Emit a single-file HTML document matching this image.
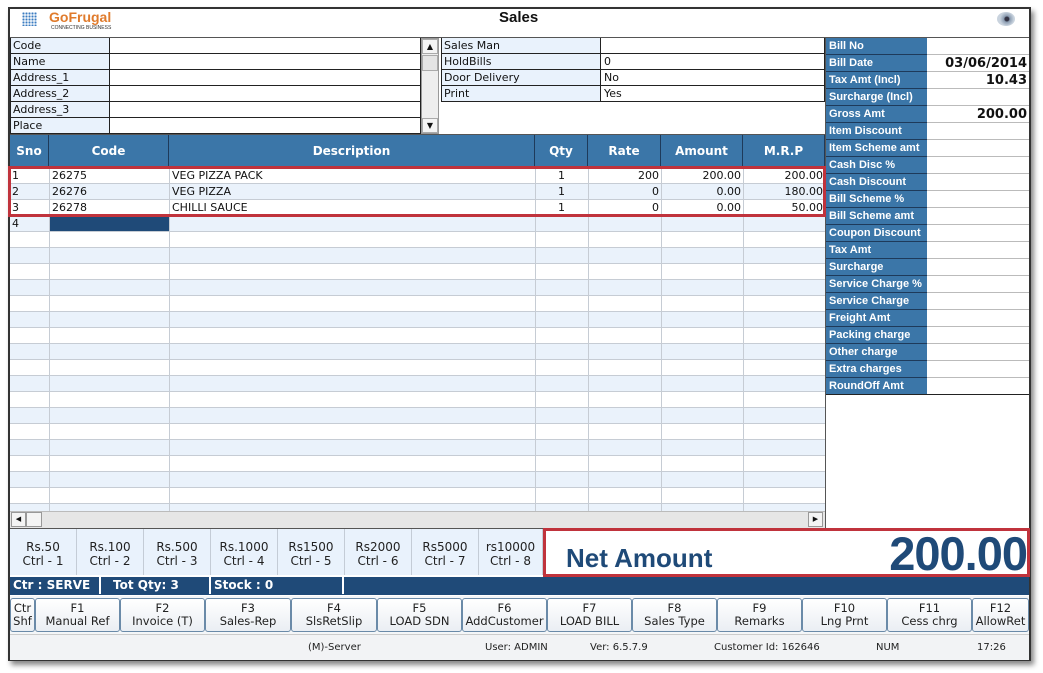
<!DOCTYPE html>
<html><head><meta charset="utf-8"><style>
*{margin:0;padding:0;box-sizing:border-box}
body{width:1043px;height:673px;background:#fff;position:relative;overflow:hidden;font-family:"DejaVu Sans","Liberation Sans",sans-serif;font-size:11px;color:#111}
.a{position:absolute}
.win{left:8px;top:7px;width:1023px;height:654px;border:2px solid #333;background:#fff;box-shadow:3px 4px 5px #888}
.lbl{background:#e9f2fc;border:1px solid #222;border-top:none;padding-left:2px;line-height:15px;height:16px}
.val{background:#fff;border:1px solid #222;border-top:none;border-left:none;padding-left:3px;line-height:15px;height:16px}
.rl{left:826px;width:101px;height:17px;background:#3b76a8;color:#fff;font-family:"Liberation Sans",sans-serif;font-weight:bold;font-size:11px;line-height:16px;padding-left:3px;border-bottom:1px solid #1e3a5a;white-space:nowrap;overflow:hidden}
.rv{left:927px;width:102px;height:17px;border-bottom:1px solid #bbb;text-align:right;font-weight:bold;font-size:13px;line-height:17px;padding-right:2px}
.hd{top:135px;height:33px;background:#3b76a8;color:#fff;font-weight:bold;font-size:12px;line-height:33px;text-align:center;border-right:1px solid #1e3a5a}
.row{left:10px;width:815px;height:16px;line-height:15px;border-bottom:1px solid #c6ccd4}
.c{position:absolute;top:0;height:15px;padding:0 2px;white-space:nowrap}
.den{top:529px;height:46px;width:67px;border-right:1px solid #c4ccd6;background:#e9f2fc;text-align:center;font-size:12px;line-height:14px;padding-top:11px;color:#222}
.fk{top:598px;height:34px;border:1px solid #6a8aa8;border-radius:3px;background:linear-gradient(#fff,#eaeef3);text-align:center;font-size:11.5px;line-height:13px;padding-top:3px;color:#222;white-space:nowrap;overflow:hidden}
.st{top:642px;font-size:10px;color:#222}
</style></head><body>
<div class="a win"></div>
<!-- title -->
<div class="a" style="left:22px;top:12px;width:15px;height:14px;background:radial-gradient(circle,#3a7bc0 1px,transparent 1.2px) 0 0/3px 3px"></div>
<div class="a" style="left:49px;top:9px;font-family:'Liberation Sans',sans-serif;font-weight:bold;font-size:14px;color:#e07b2c">GoFrugal</div>
<div class="a" style="left:51px;top:25px;font-size:5px;color:#333;font-family:'Liberation Sans',sans-serif">CONNECTING BUSINESS</div>
<div class="a" style="left:499px;top:9px;font-family:'Liberation Sans',sans-serif;font-weight:bold;font-size:15px">Sales</div>
<div class="a" style="left:997px;top:12px;width:18px;height:14px;border-radius:50%;background:radial-gradient(circle at 55% 50%,#334 2px,#8a9bb0 3px,#c9d3de 7px)"></div>
<div class="a" style="left:10px;top:37px;width:1019px;height:1px;background:#555"></div>
<!-- left form -->
<div class="a" style="left:10px;top:38px;width:411px;border-top:1px solid #222"></div>
<div class="a lbl" style="left:10px;top:38px;width:100px">Code</div><div class="a val" style="left:110px;top:38px;width:311px"></div>
<div class="a lbl" style="left:10px;top:54px;width:100px">Name</div><div class="a val" style="left:110px;top:54px;width:311px"></div>
<div class="a lbl" style="left:10px;top:70px;width:100px">Address_1</div><div class="a val" style="left:110px;top:70px;width:311px"></div>
<div class="a lbl" style="left:10px;top:86px;width:100px">Address_2</div><div class="a val" style="left:110px;top:86px;width:311px"></div>
<div class="a lbl" style="left:10px;top:102px;width:100px">Address_3</div><div class="a val" style="left:110px;top:102px;width:311px"></div>
<div class="a lbl" style="left:10px;top:118px;width:100px">Place</div><div class="a val" style="left:110px;top:118px;width:311px"></div>
<div class="a" style="left:421px;top:38px;width:18px;height:96px;background:#eee;border:1px solid #999"></div>
<div class="a" style="left:422px;top:39px;width:16px;height:15px;background:#f4f4f4;border:1px solid #aaa;font-size:8px;text-align:center;line-height:13px">▲</div>
<div class="a" style="left:422px;top:55px;width:16px;height:16px;background:#e4e4e4;border:1px solid #aaa"></div>
<div class="a" style="left:422px;top:118px;width:16px;height:15px;background:#f4f4f4;border:1px solid #aaa;font-size:8px;text-align:center;line-height:13px">▼</div>
<!-- middle form -->
<div class="a" style="left:441px;top:38px;width:384px;border-top:1px solid #222"></div>
<div class="a lbl" style="left:441px;top:38px;width:160px">Sales Man</div><div class="a val" style="left:601px;top:38px;width:224px"></div>
<div class="a lbl" style="left:441px;top:54px;width:160px">HoldBills</div><div class="a val" style="left:601px;top:54px;width:224px">0</div>
<div class="a lbl" style="left:441px;top:70px;width:160px">Door Delivery</div><div class="a val" style="left:601px;top:70px;width:224px">No</div>
<div class="a lbl" style="left:441px;top:86px;width:160px">Print</div><div class="a val" style="left:601px;top:86px;width:224px">Yes</div>
<div class="a" style="left:10px;top:134px;width:816px;height:1px;background:#555"></div>
<!-- right panel -->
<div class="a rl" style="top:38px">Bill No</div><div class="a rv" style="top:38px"></div>
<div class="a rl" style="top:55px">Bill Date</div><div class="a rv" style="top:55px">03/06/2014</div>
<div class="a rl" style="top:72px">Tax Amt (Incl)</div><div class="a rv" style="top:72px">10.43</div>
<div class="a rl" style="top:89px">Surcharge (Incl)</div><div class="a rv" style="top:89px"></div>
<div class="a rl" style="top:106px">Gross Amt</div><div class="a rv" style="top:106px">200.00</div>
<div class="a rl" style="top:123px">Item Discount</div><div class="a rv" style="top:123px"></div>
<div class="a rl" style="top:140px">Item Scheme amt</div><div class="a rv" style="top:140px"></div>
<div class="a rl" style="top:157px">Cash Disc %</div><div class="a rv" style="top:157px"></div>
<div class="a rl" style="top:174px">Cash Discount</div><div class="a rv" style="top:174px"></div>
<div class="a rl" style="top:191px">Bill Scheme %</div><div class="a rv" style="top:191px"></div>
<div class="a rl" style="top:208px">Bill Scheme amt</div><div class="a rv" style="top:208px"></div>
<div class="a rl" style="top:225px">Coupon Discount</div><div class="a rv" style="top:225px"></div>
<div class="a rl" style="top:242px">Tax Amt</div><div class="a rv" style="top:242px"></div>
<div class="a rl" style="top:259px">Surcharge</div><div class="a rv" style="top:259px"></div>
<div class="a rl" style="top:276px">Service Charge %</div><div class="a rv" style="top:276px"></div>
<div class="a rl" style="top:293px">Service Charge</div><div class="a rv" style="top:293px"></div>
<div class="a rl" style="top:310px">Freight Amt</div><div class="a rv" style="top:310px"></div>
<div class="a rl" style="top:327px">Packing charge</div><div class="a rv" style="top:327px"></div>
<div class="a rl" style="top:344px">Other charge</div><div class="a rv" style="top:344px"></div>
<div class="a rl" style="top:361px">Extra charges</div><div class="a rv" style="top:361px"></div>
<div class="a rl" style="top:378px">RoundOff Amt</div><div class="a rv" style="top:378px"></div>
<div class="a" style="left:826px;top:394px;width:203px;height:1px;background:#222"></div>
<div class="a" style="left:825px;top:38px;width:1px;height:490px;background:#555"></div>
<!-- grid -->
<div class="a" style="left:10px;top:168px;width:815px;height:343px;background:repeating-linear-gradient(#fff 0 15px,#c6ccd4 15px 16px,#eaf2fb 16px 31px,#c6ccd4 31px 32px)"></div>
<div class="a" style="left:49px;top:168px;width:1px;height:343px;background:#c6ccd4"></div>
<div class="a" style="left:169px;top:168px;width:1px;height:343px;background:#c6ccd4"></div>
<div class="a" style="left:535px;top:168px;width:1px;height:343px;background:#c6ccd4"></div>
<div class="a" style="left:588px;top:168px;width:1px;height:343px;background:#c6ccd4"></div>
<div class="a" style="left:661px;top:168px;width:1px;height:343px;background:#c6ccd4"></div>
<div class="a" style="left:743px;top:168px;width:1px;height:343px;background:#c6ccd4"></div>
<div class="a hd" style="left:10px;width:39px">Sno</div>
<div class="a hd" style="left:49px;width:120px">Code</div>
<div class="a hd" style="left:169px;width:366px">Description</div>
<div class="a hd" style="left:535px;width:53px">Qty</div>
<div class="a hd" style="left:588px;width:73px">Rate</div>
<div class="a hd" style="left:661px;width:82px">Amount</div>
<div class="a hd" style="left:743px;width:82px">M.R.P</div>
<div class="a row" style="top:168px"><span class="c" style="left:0">1</span><span class="c" style="left:40px">26275</span><span class="c" style="left:160px">VEG PIZZA PACK</span><span class="c" style="left:525px;width:53px;text-align:center">1</span><span class="c" style="left:578px;width:73px;text-align:right">200</span><span class="c" style="left:651px;width:82px;text-align:right">200.00</span><span class="c" style="left:733px;width:82px;text-align:right">200.00</span></div>
<div class="a row" style="top:184px"><span class="c" style="left:0">2</span><span class="c" style="left:40px">26276</span><span class="c" style="left:160px">VEG PIZZA</span><span class="c" style="left:525px;width:53px;text-align:center">1</span><span class="c" style="left:578px;width:73px;text-align:right">0</span><span class="c" style="left:651px;width:82px;text-align:right">0.00</span><span class="c" style="left:733px;width:82px;text-align:right">180.00</span></div>
<div class="a row" style="top:200px"><span class="c" style="left:0">3</span><span class="c" style="left:40px">26278</span><span class="c" style="left:160px">CHILLI SAUCE</span><span class="c" style="left:525px;width:53px;text-align:center">1</span><span class="c" style="left:578px;width:73px;text-align:right">0</span><span class="c" style="left:651px;width:82px;text-align:right">0.00</span><span class="c" style="left:733px;width:82px;text-align:right">50.00</span></div>
<div class="a row" style="top:216px;border:none"><span class="c" style="left:0">4</span></div>
<div class="a" style="left:50px;top:216px;width:119px;height:15px;background:#1f4a78"></div>
<div class="a" style="left:8px;top:166px;width:818px;height:51px;border:3px solid #c0333c"></div>
<!-- h scroll -->
<div class="a" style="left:10px;top:511px;width:815px;height:17px;background:#e6e6e6;border-top:1px solid #bbb"></div>
<div class="a" style="left:11px;top:512px;width:15px;height:15px;background:#f4f4f4;border:1px solid #999;font-size:7px;line-height:13px;text-align:center">◀</div>
<div class="a" style="left:26px;top:512px;width:16px;height:15px;background:#f4f4f4;border:1px solid #999"></div>
<div class="a" style="left:808px;top:512px;width:15px;height:15px;background:#f4f4f4;border:1px solid #999;font-size:7px;line-height:13px;text-align:center">▶</div>
<div class="a" style="left:10px;top:528px;width:533px;height:1px;background:#555"></div>
<!-- denominations -->
<div class="a den" style="left:10px">Rs.50<br>Ctrl - 1</div>
<div class="a den" style="left:77px">Rs.100<br>Ctrl - 2</div>
<div class="a den" style="left:144px">Rs.500<br>Ctrl - 3</div>
<div class="a den" style="left:211px">Rs.1000<br>Ctrl - 4</div>
<div class="a den" style="left:278px">Rs1500<br>Ctrl - 5</div>
<div class="a den" style="left:345px">Rs2000<br>Ctrl - 6</div>
<div class="a den" style="left:412px">Rs5000<br>Ctrl - 7</div>
<div class="a den" style="left:479px;width:64px">rs10000<br>Ctrl - 8</div>
<div class="a" style="left:543px;top:528px;width:487px;height:49px;border:3px solid #c0333c;background:#fff"></div>
<div class="a" style="left:566px;top:543px;font-family:'Liberation Sans',sans-serif;font-weight:bold;font-size:26px;color:#1f4a78">Net Amount</div>
<div class="a" style="right:16px;top:529px;font-family:'Liberation Sans',sans-serif;font-weight:bold;font-size:47px;line-height:50px;color:#1f4a78;letter-spacing:-1px">200.00</div>
<!-- status bar -->
<div class="a" style="left:10px;top:577px;width:1019px;height:18px;background:#1f4a78"></div>
<div class="a" style="left:11px;top:577px;width:90px;height:17px;border-right:2px solid #fff;color:#fff;font-weight:bold;font-size:12px;line-height:16px;padding-left:2px">Ctr : SERVE</div>
<div class="a" style="left:111px;top:577px;width:98px;height:17px;color:#fff;font-weight:bold;font-size:12px;line-height:16px;padding-left:2px">Tot Qty: 3</div>
<div class="a" style="left:209px;top:577px;width:2px;height:17px;background:#fff"></div>
<div class="a" style="left:214px;top:577px;color:#fff;font-weight:bold;font-size:12px;line-height:16px">Stock : 0</div>
<div class="a" style="left:342px;top:577px;width:2px;height:17px;background:#fff"></div>
<!-- function keys -->
<div class="a" style="left:10px;top:596px;width:1019px;height:38px;background:#f4f6f8"></div>
<div class="a fk" style="left:10px;width:25px">Ctr<br>Shf</div>
<div class="a fk" style="left:35px;width:85px">F1<br>Manual Ref</div>
<div class="a fk" style="left:120px;width:85px">F2<br>Invoice (T)</div>
<div class="a fk" style="left:205px;width:86px">F3<br>Sales-Rep</div>
<div class="a fk" style="left:291px;width:86px">F4<br>SlsRetSlip</div>
<div class="a fk" style="left:377px;width:85px">F5<br>LOAD SDN</div>
<div class="a fk" style="left:462px;width:85px">F6<br>AddCustomer</div>
<div class="a fk" style="left:547px;width:85px">F7<br>LOAD BILL</div>
<div class="a fk" style="left:632px;width:85px">F8<br>Sales Type</div>
<div class="a fk" style="left:717px;width:85px">F9<br>Remarks</div>
<div class="a fk" style="left:802px;width:85px">F10<br>Lng Prnt</div>
<div class="a fk" style="left:887px;width:85px">F11<br>Cess chrg</div>
<div class="a fk" style="left:972px;width:57px">F12<br>AllowRet</div>
<div class="a" style="left:10px;top:634px;width:1019px;height:26px;background:#f2f3f5;border-top:1px solid #ccc"></div>
<div class="a st" style="left:308px">(M)-Server</div>
<div class="a st" style="left:485px">User: ADMIN</div>
<div class="a st" style="left:590px">Ver: 6.5.7.9</div>
<div class="a st" style="left:714px">Customer Id: 162646</div>
<div class="a st" style="left:876px">NUM</div>
<div class="a st" style="left:977px">17:26</div>
</body></html>
